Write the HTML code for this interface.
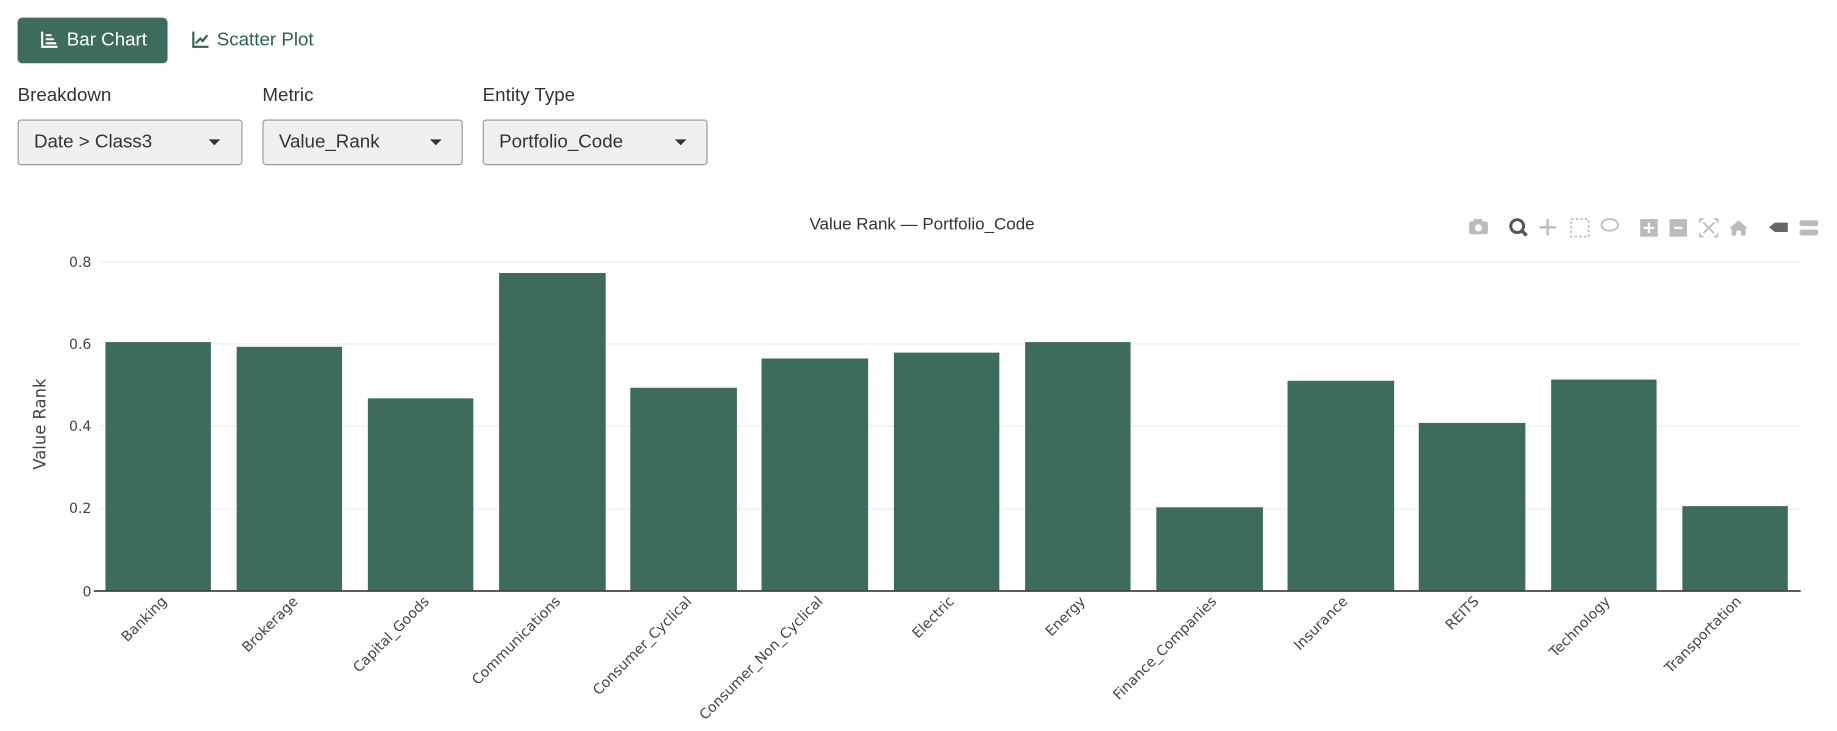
<!DOCTYPE html>
<html><head><meta charset="utf-8"><style>
html,body{margin:0;padding:0;background:#fff;width:1837px;height:731px;overflow:hidden}
#w{width:1568px;height:624px;transform:scale(1.17156);transform-origin:0 0;position:relative;font-family:"Liberation Sans",sans-serif}
.btn{position:absolute;top:15px;height:39px;border-radius:4px;font-size:16px;line-height:39px}
.lbl{position:absolute;top:73px;font-size:16px;color:#333}
.dd{position:absolute;top:102px;height:37px;background:#eff0f1;border:1px solid #9a9a9a;border-radius:3px;font-size:16px;color:#333;line-height:37px;box-sizing:content-box}
.dd span{position:absolute;left:13px}
.dd i{position:absolute;top:16px;width:0;height:0;border-left:5px solid transparent;border-right:5px solid transparent;border-top:5px solid #333}
</style></head><body><div id="w">
<div class="btn" style="left:15px;width:128px;background:#3d6b5c;color:#fff">
<svg style="position:absolute;left:19px;top:11px" width="16" height="16" viewBox="0 0 16 16" fill="none" stroke="#fff" stroke-width="1.8"><path d="M2 1v13h13M5 4h5M5 7.5h7M5 11h9"/></svg>
<span style="position:absolute;left:42px">Bar Chart</span></div>
<div class="btn" style="left:155px;width:130px;color:#2f5f52">
<svg style="position:absolute;left:8px;top:11px" width="16" height="16" viewBox="0 0 16 16" fill="none" stroke="#2f5f52" stroke-width="1.8"><path d="M2 1v13h13M4 11l4-4 2 2 4-5"/></svg>
<span style="position:absolute;left:30px">Scatter Plot</span></div>
<div class="lbl" style="left:15px">Breakdown</div>
<div class="lbl" style="left:224px">Metric</div>
<div class="lbl" style="left:412px">Entity Type</div>
<div class="dd" style="left:15px;width:190px"><span>Date &gt; Class3</span><i style="left:162px"></i></div>
<div class="dd" style="left:224px;width:169px"><span>Value_Rank</span><i style="left:142px"></i></div>
<div class="dd" style="left:412px;width:190px"><span>Portfolio_Code</span><i style="left:163px"></i></div>
<svg style="position:absolute;left:0;top:0" width="1568" height="624" font-family="'DejaVu Sans','Liberation Sans',sans-serif">
<text x="787" y="196" text-anchor="middle" font-size="14.5" fill="#333" font-family="Liberation Sans">Value Rank — Portfolio_Code</text>
<g fill="#bbb">
<rect x="1254" y="189" width="16" height="11" rx="2"/><circle cx="1262" cy="194.5" r="3" fill="#fff"/><rect x="1258" y="187" width="7" height="3"/>
<circle cx="1295" cy="193" r="5.5" fill="none" stroke="#555" stroke-width="2.5"/><path d="M1299 197l4 4" stroke="#555" stroke-width="3"/>
<path d="M1321 187v14M1314 194h14" stroke="#bbb" stroke-width="2"/>
<rect x="1341" y="187" width="15" height="15" fill="none" stroke="#bbb" stroke-width="1.5" stroke-dasharray="2 2"/>
<ellipse cx="1374" cy="192" rx="7" ry="5" fill="none" stroke="#bbb" stroke-width="1.5"/>
<rect x="1400" y="187" width="15" height="15"/><path d="M1407.5 190v9M1403 194.5h9" stroke="#fff" stroke-width="2"/>
<rect x="1425" y="187" width="15" height="15"/><path d="M1429 194.5h7" stroke="#fff" stroke-width="2"/>
<path d="M1451 187h3M1451 187v3M1466 187h-3M1466 187v3M1451 202h3M1451 202v-3M1466 202h-3M1466 202v-3M1454 190l9 9M1463 190l-9 9" stroke="#bbb" stroke-width="1.5" fill="none"/>
<path d="M1476 195l8-7 8 7h-2v6h-4v-4h-4v4h-4v-6z"/>
<path d="M1510 194l5-4h11v8h-11z" fill="#666"/>
<rect x="1536" y="188" width="16" height="5" rx="2"/><rect x="1536" y="196" width="16" height="5" rx="2"/>
</g>
<g stroke="#eee" stroke-width="1"><path d="M85 223.5h1452M85 293.5h1452M85 363.5h1452M85 434.5h1452"/></g>
<g font-size="12" fill="#444" text-anchor="end">
<text x="78" y="228">0.8</text><text x="78" y="298">0.6</text><text x="78" y="368">0.4</text><text x="78" y="438">0.2</text><text x="78" y="509">0</text></g>
<text transform="translate(39,362) rotate(-90)" text-anchor="middle" font-size="14" fill="#444">Value Rank</text>
<g fill="#3d6b5c">
<rect x="90" y="292" width="90" height="212"/>
<rect x="202" y="296" width="90" height="208"/>
<rect x="314" y="340" width="90" height="164"/>
<rect x="426" y="233" width="91" height="271"/>
<rect x="538" y="331" width="91" height="173"/>
<rect x="650" y="306" width="91" height="198"/>
<rect x="763" y="301" width="90" height="203"/>
<rect x="875" y="292" width="90" height="212"/>
<rect x="987" y="433" width="91" height="71"/>
<rect x="1099" y="325" width="91" height="179"/>
<rect x="1211" y="361" width="91" height="143"/>
<rect x="1324" y="324" width="90" height="180"/>
<rect x="1436" y="432" width="90" height="72"/>
</g>
<path d="M80 504.5h1457" stroke="#444" stroke-width="1.5"/>
<g font-size="12" fill="#444" text-anchor="end">
<text transform="translate(143,514) rotate(-45)">Banking</text>
<text transform="translate(255,514) rotate(-45)">Brokerage</text>
<text transform="translate(367,514) rotate(-45)">Capital_Goods</text>
<text transform="translate(479,514) rotate(-45)">Communications</text>
<text transform="translate(591,514) rotate(-45)">Consumer_Cyclical</text>
<text transform="translate(703,514) rotate(-45)">Consumer_Non_Cyclical</text>
<text transform="translate(815,514) rotate(-45)">Electric</text>
<text transform="translate(927,514) rotate(-45)">Energy</text>
<text transform="translate(1039,514) rotate(-45)">Finance_Companies</text>
<text transform="translate(1151,514) rotate(-45)">Insurance</text>
<text transform="translate(1263,514) rotate(-45)">REITS</text>
<text transform="translate(1375,514) rotate(-45)">Technology</text>
<text transform="translate(1487,514) rotate(-45)">Transportation</text>
</g>
</svg>
</div></body></html>
